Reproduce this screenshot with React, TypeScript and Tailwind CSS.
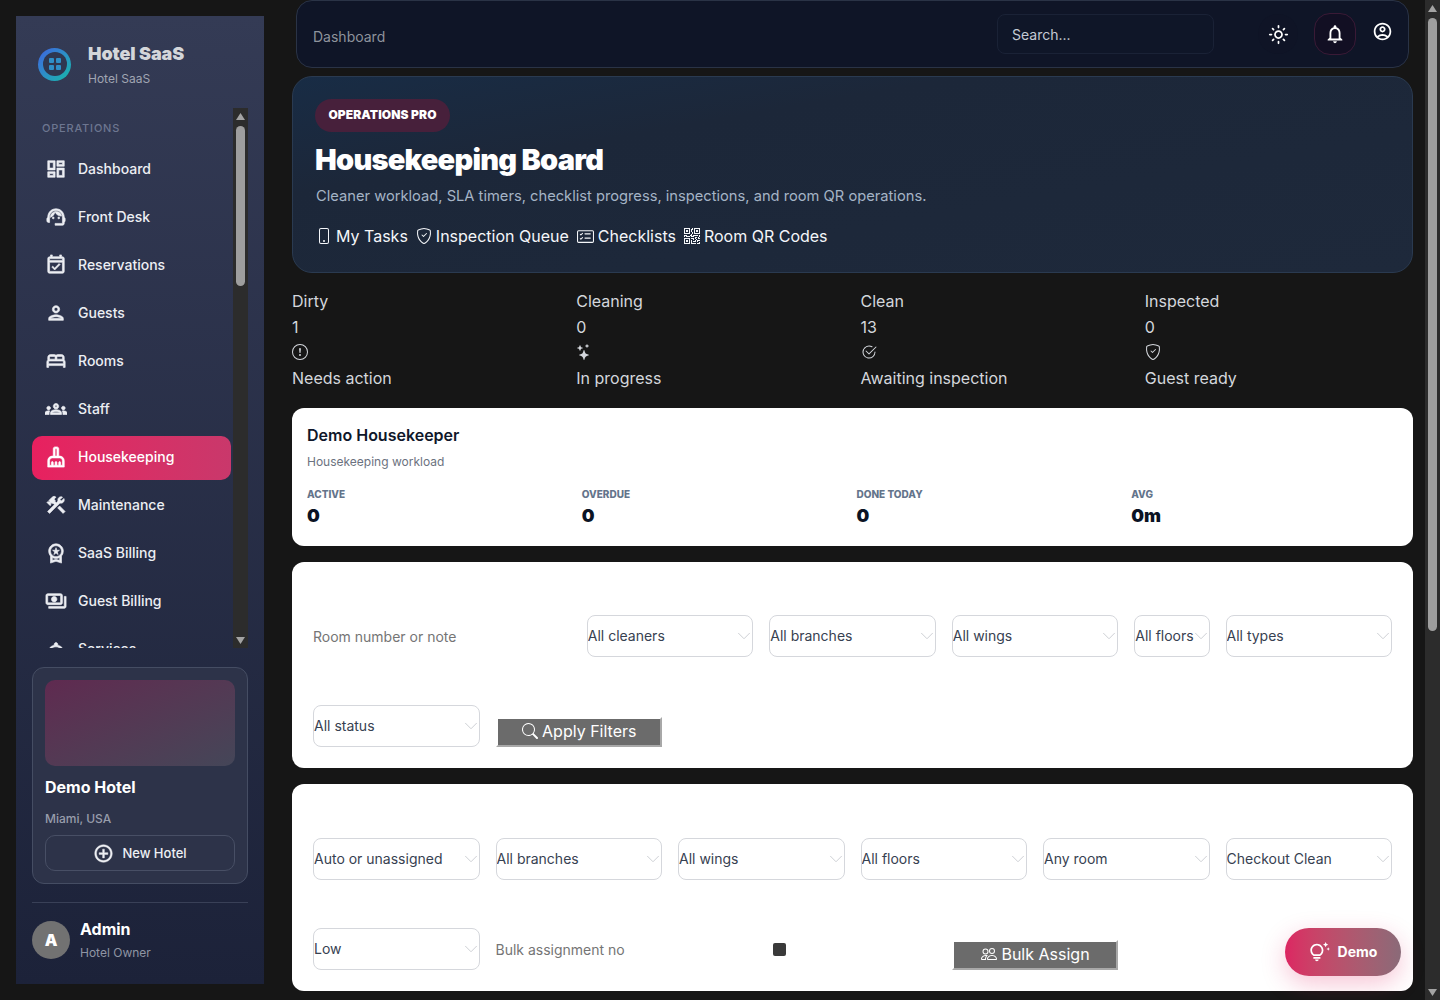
import React from "react";
import {
  MdOutlineDashboard, MdOutlineSupportAgent, MdOutlineEventAvailable, MdOutlinePerson, MdOutlineBed, MdOutlineGroups,
  MdOutlineCleaningServices, MdOutlineConstruction, MdOutlineWorkspacePremium, MdOutlinePayments, MdOutlineRoomService,
  MdOutlineAddCircleOutline, MdOutlineLightMode, MdOutlineNotifications, MdOutlineAccountCircle, MdOutlineTipsAndUpdates,
} from "react-icons/md";
import {
  BsPhone, BsShieldCheck, BsCardChecklist, BsQrCode, BsExclamationCircle, BsStars, BsCheck2Circle, BsSearch, BsPeople,
} from "react-icons/bs";
import { ChevronDown } from "lucide-react";

const nav = [
  ["Dashboard", MdOutlineDashboard],
  ["Front Desk", MdOutlineSupportAgent],
  ["Reservations", MdOutlineEventAvailable],
  ["Guests", MdOutlinePerson],
  ["Rooms", MdOutlineBed],
  ["Staff", MdOutlineGroups],
  ["Housekeeping", MdOutlineCleaningServices],
  ["Maintenance", MdOutlineConstruction],
  ["SaaS Billing", MdOutlineWorkspacePremium],
  ["Guest Billing", MdOutlinePayments],
  ["Services", MdOutlineRoomService],
] as const;

const stats = [
  ["Dirty", "1", BsExclamationCircle, "Needs action"],
  ["Cleaning", "0", BsStars, "In progress"],
  ["Clean", "13", BsCheck2Circle, "Awaiting inspection"],
  ["Inspected", "0", BsShieldCheck, "Guest ready"],
] as const;

function Arrow({ down }: { down?: boolean }) {
  return (
    <svg width="9" height="7" viewBox="0 0 9 7" className="block">
      <path d={down ? "M0 0H9L4.5 7Z" : "M4.5 0L9 7H0Z"} fill="#a3a3a3" />
    </svg>
  );
}

function FakeScrollbar({ thumbTop, thumbHeight, className }: { thumbTop: number; thumbHeight: number; className: string }) {
  return (
    <div className={`absolute top-0 w-[15px] bg-[#2c2c2c] ${className}`}>
      <div className="absolute left-[3px] top-[5px]"><Arrow /></div>
      <div
        className="absolute left-[3px] w-[9px] rounded-full bg-[#9e9e9e]"
        style={{ top: thumbTop, height: thumbHeight }}
      />
      <div className="absolute bottom-[4px] left-[3px]"><Arrow down /></div>
    </div>
  );
}

function Select({ label, span = "col-span-2" }: { label: string; span?: string }) {
  return (
    <div className={`relative h-[42px] ${span}`}>
      <select className="h-full w-full appearance-none rounded-lg border border-[#d5d7dc] bg-white text-sm text-[#374151] outline-none">
        <option>{label}</option>
      </select>
      <ChevronDown className="pointer-events-none absolute right-[-2px] top-[10px] text-[#c9ccd1]" size={22} strokeWidth={1} />
    </div>
  );
}

function GrayButton({ icon, label }: { icon: React.ReactNode; label: string }) {
  return (
    <button className="col-span-2 mt-3 flex h-[30px] items-center justify-center gap-1 self-start border-2 border-t-white border-l-white border-r-[#a8a8a8] border-b-[#a8a8a8] bg-[#6b6b6b] pb-[2px] pl-[1px] text-base text-white">
      {icon}
      {label}
    </button>
  );
}

export default function App() {
  return (
    <div className="relative h-screen overflow-hidden bg-[#161616] font-['Inter','Liberation_Sans',sans-serif]">
      <div className="flex items-start">
        <aside className="mb-4 ml-4 mt-4 flex h-[968px] w-[248px] shrink-0 flex-col bg-gradient-to-b from-[#343b55] to-[#1c2239] px-4">
          <div className="flex h-[92px] items-center gap-[17px] pl-[6px]">
            <div className="mt-[4px] flex h-[33px] w-[33px] items-center justify-center rounded-full bg-gradient-to-br from-[#3f5fe0] to-[#14b8a6]">
              <div className="grid h-[24px] w-[24px] grid-cols-2 place-content-center gap-[2px] rounded-full bg-[#2f3750] px-[6.5px]">
                <span className="h-[5px] w-[5px] rounded-[1px] bg-[#2f8fc8]" />
                <span className="h-[5px] w-[5px] rounded-[1px] bg-[#2f8fc8]" />
                <span className="h-[5px] w-[5px] rounded-[1px] bg-[#2f8fc8]" />
                <span className="h-[5px] w-[5px] rounded-[1px] bg-[#2f8fc8]" />
              </div>
            </div>
            <div className="mt-[9px]">
              <div className="text-lg leading-[24px] font-black tracking-[-0.1px] text-[#d4d6da]">Hotel SaaS</div>
              <div className="mt-[1px] text-xs leading-[24px] text-[#a0a5b2]">Hotel SaaS</div>
            </div>
          </div>

          <div className="relative h-[540px] w-[216px] shrink-0 overflow-hidden">
            <div className="pr-[17px]">
              <div className="flex h-[40px] items-center pl-[10px] text-[11px] font-medium tracking-[0.8px] text-[#6d7690]">OPERATIONS</div>
              <div className="-mt-[1px] flex flex-col gap-1">
                {nav.map(([label, Icon]) => (
                  <div
                    key={label}
                    className={`flex items-center gap-[11px] rounded-[10px] pl-[13px] text-sm font-medium ${
                      label === "Housekeeping"
                        ? "mt-[1px] -mb-[1px] h-[44px] bg-gradient-to-r from-[#e8205f] to-[#c9386b] pb-[2px] text-white"
                        : "h-[44px] text-[#eceef3]"
                    }`}
                  >
                    <Icon size={22} stroke="currentColor" strokeWidth={0.7} className="shrink-0 [&_path[fill=none]]:[stroke:none]" />
                    {label}
                  </div>
                ))}
              </div>
            </div>
            <FakeScrollbar thumbTop={18} thumbHeight={160} className="right-0 h-[540px]" />
          </div>

          <div className="mt-[19px] flex h-[217px] flex-col rounded-xl border border-[#454d63] bg-[#2d3349] p-3">
            <div className="h-[86px] shrink-0 rounded-[10px] bg-gradient-to-br from-[#5f2a50] to-[#444658]" />
            <div className="mt-[10px] text-base leading-[22px] font-bold text-white">Demo Hotel</div>
            <div className="mt-[11px] text-xs leading-[20px] font-medium text-[#989dab]">Miami, USA</div>
            <button className="mt-[6px] flex h-[36px] items-center justify-center gap-[8px] rounded-[10px] border border-[#484f65] pt-[1px] text-[13px] font-medium text-[#eef0f4]">
              <MdOutlineAddCircleOutline size={21} stroke="currentColor" strokeWidth={0.5} className="[&_path[fill=none]]:[stroke:none]" />
              New Hotel
            </button>
          </div>

          <div className="mt-[18px] flex items-start gap-[10px] border-t border-[#394057] pt-[18px]">
            <div className="flex h-[38px] w-[38px] items-center justify-center rounded-full bg-[#727272] text-base font-black text-white">A</div>
            <div className="-mt-[3px]">
              <div className="text-base leading-[22px] font-bold text-white">Admin</div>
              <div className="mt-[3px] text-xs leading-[20px] text-[#8f95a4]">Hotel Owner</div>
            </div>
          </div>
        </aside>

        <main className="ml-[28px] w-[1121px]">
          <header className="mx-1 flex h-[68px] items-center rounded-2xl border border-[#2a3346] bg-[#0f1527] pl-4 pr-[15px]">
            <span className="mt-[5px] text-sm text-[#8e939c]">Dashboard</span>
            <div className="ml-auto flex h-[40px] w-[217px] items-center rounded-lg border border-[#1a2236] bg-[#0f1628] pl-[14px] pt-[2px] text-sm text-[#c4cad4]">Search...</div>
            <div className="ml-[44px] flex h-[40px] w-[40px] items-center justify-center rounded-full bg-[#0f1426] text-white">
              <MdOutlineLightMode size={21} />
            </div>
            <div className="ml-[16px] flex h-[42px] w-[42px] items-center justify-center rounded-2xl border border-[#3a1a36] bg-[#120f23] text-white">
              <MdOutlineNotifications size={22} />
            </div>
            <MdOutlineAccountCircle size={21} className="mb-[6px] ml-[16px] text-white" />
          </header>

          <section className="mt-2 h-[197px] rounded-[20px] border border-[#2a3a50] bg-gradient-to-br from-[#182c45] via-[#1c2739] via-30% to-[#1e293b] pl-[22px] pt-[22px]">
            <div className="flex h-[33px] w-[135px] items-center justify-center rounded-full bg-[#47203b] pb-[2px] text-xs font-black tracking-[0.1px] text-white">OPERATIONS PRO</div>
            <h1 className="mt-[10px] text-[29px] leading-[36px] font-black tracking-[-0.75px] text-white">Housekeeping Board</h1>
            <p className="ml-[1px] mt-[6px] text-[14.7px] leading-[24px] text-[#a5b4c6]">Cleaner workload, SLA timers, checklist progress, inspections, and room QR operations.</p>
            <div className="ml-[1px] mt-[16px] flex items-center gap-2 text-base leading-[24px] text-[#f4f6f9]">
              <span className="flex items-center gap-[4px]"><BsPhone size={16} />My Tasks</span>
              <span className="flex items-center gap-[4px]"><BsShieldCheck size={16} />Inspection Queue</span>
              <span className="flex items-center gap-[4px]"><BsCardChecklist size={17} />Checklists</span>
              <span className="flex items-center gap-[4px]"><BsQrCode size={16} />Room QR Codes</span>
            </div>
          </section>

          <section className="mt-[15px] grid grid-cols-4 gap-4 text-base leading-[26px] text-[#d4d7dc]">
            {stats.map(([a, b, Icon, c]) => (
              <div key={a} className="flex flex-col">
                <span>{a}</span>
                <span>{b}</span>
                <span className="flex h-[24px] items-center"><Icon size={16} /></span>
                <span className="mt-[1px]">{c}</span>
              </div>
            ))}
          </section>

          <section className="mt-[17px] h-[138px] rounded-xl bg-white px-[15px] pt-[14px]">
            <div className="text-base leading-[26px] font-semibold text-[#0f172a]">Demo Housekeeper</div>
            <div className="mt-[5px] text-xs leading-[18px] text-[#6b7280]">Housekeeping workload</div>
            <div className="mt-[15px] grid grid-cols-4 gap-2">
              {[["ACTIVE", "0"], ["OVERDUE", "0"], ["DONE TODAY", "0"], ["AVG", "0m"]].map(([k, v]) => (
                <div key={k}>
                  <div className="text-[10px] leading-[16px] font-extrabold text-[#64748b]">{k}</div>
                  <div className="mt-[2px] text-lg leading-[24px] font-black text-[#0b1324]">{v}</div>
                </div>
              ))}
            </div>
          </section>

          <section className="mt-4 grid h-[206px] grid-cols-12 content-start gap-x-4 gap-y-[48px] rounded-xl bg-white px-[21px] pt-[53px]">
            <input placeholder="Room number or note" className="col-span-3 h-[42px] bg-transparent text-sm text-[#374151] outline-none placeholder:text-[#757575]" />
            <Select label="All cleaners" />
            <Select label="All branches" />
            <Select label="All wings" />
            <Select label="All floors" span="col-span-1" />
            <Select label="All types" />
            <Select label="All status" />
            <GrayButton icon={<BsSearch size={16} />} label="Apply Filters" />
          </section>

          <section className="mt-4 grid h-[207px] grid-cols-12 content-start gap-x-4 gap-y-[48px] rounded-xl bg-white px-[21px] pt-[54px]">
            <Select label="Auto or unassigned" />
            <Select label="All branches" />
            <Select label="All wings" />
            <Select label="All floors" />
            <Select label="Any room" />
            <Select label="Checkout Clean" />
            <Select label="Low" />
            <input placeholder="Bulk assignment no" className="col-span-3 h-[42px] bg-transparent text-sm text-[#374151] outline-none placeholder:text-[#757575]" />
            <div className="col-span-2 flex h-[42px] items-center">
              <span className="ml-[4px] h-[13px] w-[13px] rounded-[2px] bg-[#3a3a3a]" />
            </div>
            <GrayButton icon={<BsPeople size={16} />} label="Bulk Assign" />
          </section>
        </main>
      </div>

      <FakeScrollbar thumbTop={18} thumbHeight={613} className="right-0 h-[1000px]" />

      <button className="absolute left-[1285px] top-[928px] flex h-[48px] w-[116px] items-center justify-center gap-[8px] rounded-3xl bg-gradient-to-r from-[#dc2562] to-[#8a6a78] text-sm font-bold text-white shadow-[0_8px_24px_rgba(225,29,93,0.25)]">
        <MdOutlineTipsAndUpdates size={21} />
        Demo
      </button>
    </div>
  );
}
